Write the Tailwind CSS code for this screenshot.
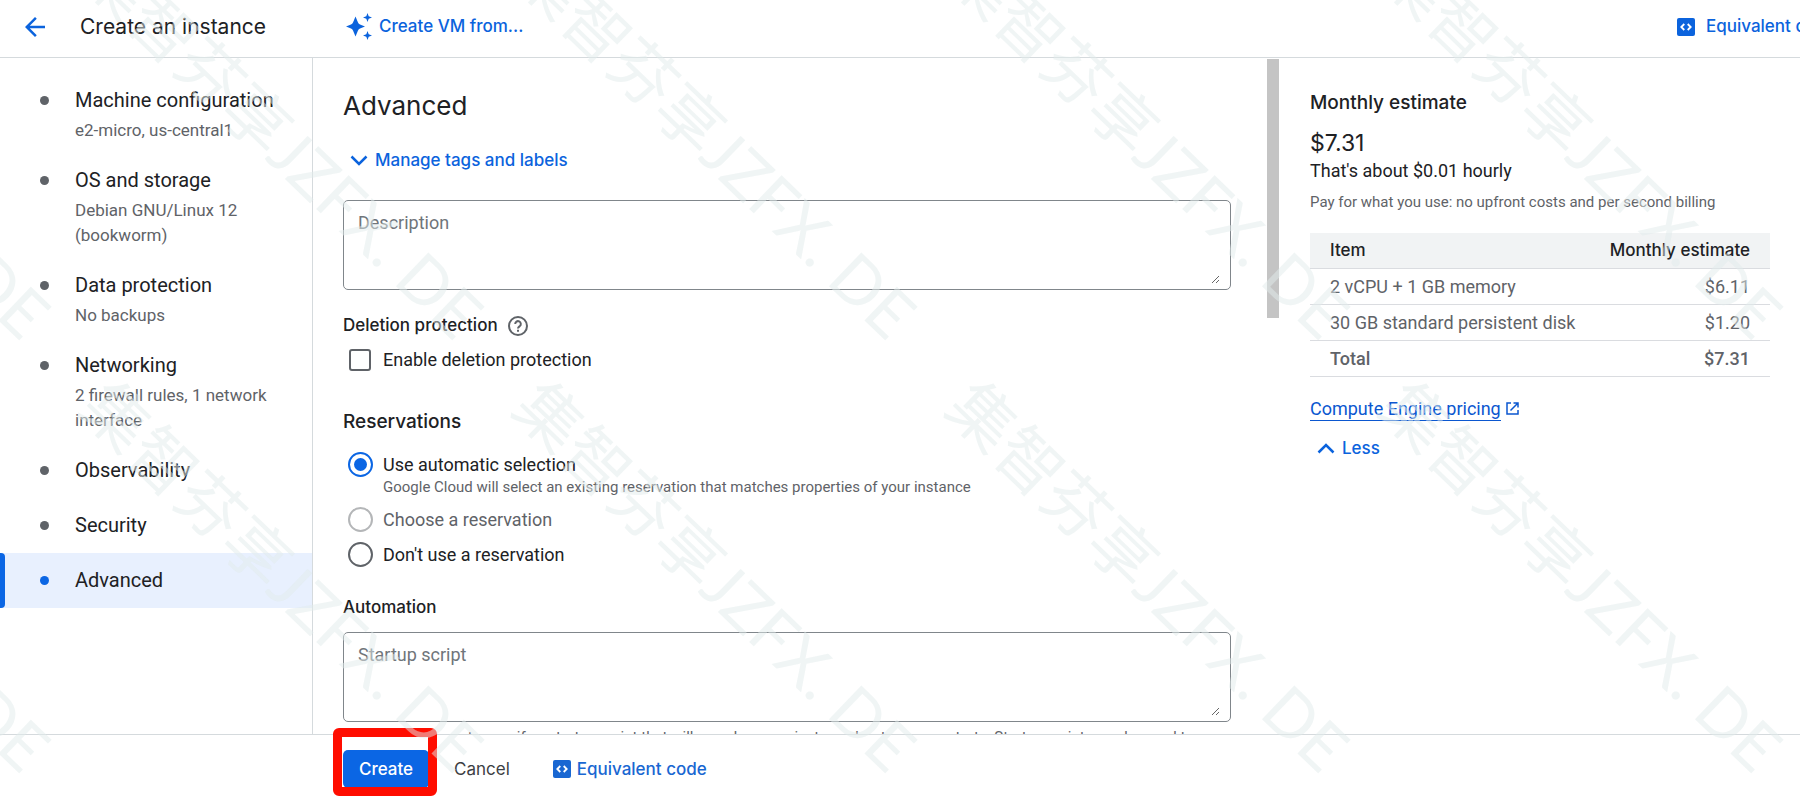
<!DOCTYPE html>
<html lang="en">

<head>
      <meta charset="UTF-8">
      <meta name="viewport" content="width=device-width, initial-scale=1.0">
      <title>Create an instance</title>
      <script src="https://cdn.jsdelivr.net/npm/@tailwindcss/browser@4"></script>
</head>

<body class="relative flex h-screen flex-col overflow-hidden bg-white font-[Roboto,sans-serif] text-lg leading-[25px] text-[#202124]">
      <!-- Header -->
      <header class="flex h-[58px] shrink-0 items-center border-b border-[#d5dadd] pb-1 font-[Inter,sans-serif]">
            <button aria-label="Back" class="ml-5 text-[#0b63dd]">
                  <svg class="size-[30px]" viewBox="0 0 24 24" fill="currentColor"><path d="M20 11H7.83l5.59-5.59L12 4l-8 8 8 8 1.41-1.41L7.83 13H20v-2z" /></svg>
            </button>
            <h1 class="ml-[30px] w-[266px] text-[21px]">Create an instance</h1>
            <button class="flex items-center gap-[7px] text-[17px] font-medium text-[#0b63dd]">
                  <svg class="h-[27px] w-[26px]" viewBox="0 0 26 27" fill="currentColor">
                        <path d="M9.500 3.500L12 9.500Q12.600 11 14 11.500L19 13.500L14 15.500Q12.600 16 12 17.500L9.500 23.500L7 17.500Q6.400 16 5 15.500L0 13.500L5 11.500Q6.400 11 7 9.500Z" />
                        <path d="M21.500 0L22.700 3.300L26 4.500L22.700 5.700L21.500 9L20.300 5.700L17 4.500L20.300 3.300Z" />
                        <path d="M21.500 18L22.700 21.300L26 22.500L22.700 23.700L21.500 27L20.300 23.700L17 22.500L20.300 21.300Z" />
                  </svg>
                  Create VM from...
            </button>
            <button class="ml-auto flex w-[123px] shrink-0 items-center gap-[11px] text-[17px] font-medium whitespace-nowrap text-[#0b63dd]">
                  <svg class="size-[18px] shrink-0" viewBox="0 0 18 18"><rect width="18" height="18" rx="2" fill="currentColor" /><path d="M7.300 6L4.300 9l3 3M10.700 6l3 3-3 3" fill="none" stroke="#fff" stroke-width="1.800" /></svg>
                  Equivalent code
            </button>
      </header>

      <div class="flex min-h-0 flex-1">
            <!-- Sidebar -->
            <nav class="w-[313px] shrink-0 border-r border-[#d5dadd] pt-[15px]">
                  <a href="#machine" class="relative block pt-[15px] pr-8 pb-[10px] pl-[75px]">
                        <span class="absolute top-[23px] left-10 size-[9px] rounded-full bg-[#5f6368]"></span>
                        <span class="block text-xl leading-[25px]">Machine configuration</span>
                        <span class="mt-[5px] block text-[17px] leading-[25px] text-[#5f6368]">e2-micro, us-central1</span>
                  </a>
                  <a href="#storage" class="relative block pt-[15px] pr-8 pb-[10px] pl-[75px]">
                        <span class="absolute top-[23px] left-10 size-[9px] rounded-full bg-[#5f6368]"></span>
                        <span class="block text-xl leading-[25px]">OS and storage</span>
                        <span class="mt-[5px] block text-[17px] leading-[25px] text-[#5f6368]">Debian GNU/Linux 12 (bookworm)</span>
                  </a>
                  <a href="#protection" class="relative block pt-[15px] pr-8 pb-[10px] pl-[75px]">
                        <span class="absolute top-[23px] left-10 size-[9px] rounded-full bg-[#5f6368]"></span>
                        <span class="block text-xl leading-[25px]">Data protection</span>
                        <span class="mt-[5px] block text-[17px] leading-[25px] text-[#5f6368]">No backups</span>
                  </a>
                  <a href="#networking" class="relative block pt-[15px] pr-8 pb-[10px] pl-[75px]">
                        <span class="absolute top-[23px] left-10 size-[9px] rounded-full bg-[#5f6368]"></span>
                        <span class="block text-xl leading-[25px]">Networking</span>
                        <span class="mt-[5px] block text-[17px] leading-[25px] text-[#5f6368]">2 firewall rules, 1 network interface</span>
                  </a>
                  <a href="#observability" class="relative block py-[15px] pr-8 pl-[75px]">
                        <span class="absolute top-[23px] left-10 size-[9px] rounded-full bg-[#5f6368]"></span>
                        <span class="block text-xl leading-[25px]">Observability</span>
                  </a>
                  <a href="#security" class="relative block py-[15px] pr-8 pl-[75px]">
                        <span class="absolute top-[23px] left-10 size-[9px] rounded-full bg-[#5f6368]"></span>
                        <span class="block text-xl leading-[25px]">Security</span>
                  </a>
                  <a href="#advanced" class="relative block bg-[#e8f0fe] py-[15px] pr-8 pl-[75px]">
                        <span class="absolute inset-y-0 left-0 w-[5px] rounded-r bg-[#0b66e4]"></span>
                        <span class="absolute top-[23px] left-10 size-[9px] rounded-full bg-[#0b66e4]"></span>
                        <span class="block text-xl leading-[25px]">Advanced</span>
                  </a>
            </nav>

            <!-- Form -->
            <main class="relative flex min-w-0 flex-1 flex-col items-start overflow-hidden pr-[49px] pl-[30px]">
                  <h2 class="mt-[33px] font-[Inter,sans-serif] text-[26px] leading-[30px]">Advanced</h2>
                  <button class="mt-[27px] ml-[7px] flex items-center gap-[7px] font-[Inter,sans-serif] text-[17px] font-medium text-[#0b63dd]">
                        <svg class="h-[11px] w-[18px]" viewBox="0 0 18 11" fill="none" stroke="currentColor" stroke-width="2.500"><path d="M1.500 1.500L9 9l7.500-7.500" /></svg>
                        Manage tags and labels
                  </button>

                  <div class="mt-[27px] h-[90px] w-full shrink-0 rounded-[5px] border border-[#80868b] pt-[9px] pr-[10px] pb-[5px] pl-[14px]">
                        <textarea aria-label="Description" placeholder="Description" class="size-full resize placeholder-[#70757a] outline-none"></textarea>
                  </div>

                  <h3 class="mt-[23px] flex items-center gap-[10px] font-[Inter,sans-serif] text-[17px] font-medium">
                        Deletion protection
                        <svg class="size-5" viewBox="0 0 20 20" fill="none" stroke="#5f6368" stroke-width="2"><circle cx="10" cy="10" r="9" /><path d="M7.200 8a2.800 2.800 0 1 1 4.600 2.100C10.600 11 10 11.300 10 12.500" /><path d="M10 13.800v2" /></svg>
                  </h3>
                  <label class="mt-[9px] ml-1.5 flex items-center gap-3">
                        <input type="checkbox" class="size-[22px] appearance-none rounded-[3px] border-2 border-[#5f6368]">
                        Enable deletion protection
                  </label>

                  <h3 class="mt-[37px] font-[Inter,sans-serif] text-[19px] font-medium">Reservations</h3>
                  <div class="mt-[18px] ml-[5px] flex items-start gap-[10px]">
                        <input type="radio" id="auto" name="reservation" checked class="size-[25px] appearance-none rounded-full border-2 border-[#0b66e4] bg-[#0b66e4] bg-clip-content p-1">
                        <div>
                              <label for="auto" class="block">Use automatic selection</label>
                              <p class="text-[15px] leading-5 text-[#5f6368]">Google Cloud will select an existing reservation that matches properties of your instance</p>
                        </div>
                  </div>
                  <label class="mt-[10px] ml-[5px] flex items-center gap-[10px] text-[#5f6368]">
                        <input type="radio" name="reservation" disabled class="size-[25px] appearance-none rounded-full border-2 border-[#b4b6b8]">
                        Choose a reservation
                  </label>
                  <label class="mt-[10px] ml-[5px] flex items-center gap-[10px]">
                        <input type="radio" name="reservation" class="size-[25px] appearance-none rounded-full border-2 border-[#5f6368]">
                        Don't use a reservation
                  </label>

                  <h3 class="mt-[28px] font-[Inter,sans-serif] text-[17px] font-medium">Automation</h3>
                  <div class="mt-[12px] h-[90px] w-full shrink-0 rounded-[5px] border border-[#80868b] pt-[9px] pr-[10px] pb-[5px] pl-[14px]">
                        <textarea aria-label="Startup script" placeholder="Startup script" class="size-full resize placeholder-[#70757a] outline-none"></textarea>
                  </div>
                  <p class="mt-[5px] px-[15px] text-[15px] leading-5 text-[#5f6368]">You can choose to specify a startup script that will run when your instance boots up or restarts. Startup scripts can be used to install software</p>

                  <!-- Scroll thumb -->
                  <div class="absolute top-[1px] right-[1px] h-[259px] w-3 bg-[#c4c4c4]"></div>
            </main>

            <!-- Cost estimate -->
            <aside class="flex w-[520px] shrink-0 flex-col items-start px-[30px] pt-8">
                  <h2 class="font-[Inter,sans-serif] text-[19px] font-medium">Monthly estimate</h2>
                  <p class="mt-[13px] font-[Inter,sans-serif] text-[23px] leading-[30px]">$7.31</p>
                  <p>That's about $0.01 hourly</p>
                  <p class="mt-[9px] text-[15px] leading-5 text-[#5f6368]">Pay for what you use: no upfront costs and per second billing</p>
                  <table class="mt-[21px] w-full text-left whitespace-nowrap text-[#5f6368]">
                        <thead class="bg-[#f1f3f4] font-[Inter,sans-serif] text-[17px] text-[#202124]">
                              <tr class="h-[35px] border-b border-[#dadce0]">
                                    <th class="pl-5 font-medium">Item</th>
                                    <th class="pr-5 text-right font-medium">Monthly estimate</th>
                              </tr>
                        </thead>
                        <tbody>
                              <tr class="h-9 border-b border-[#dadce0]">
                                    <td class="pl-5">2 vCPU + 1 GB memory</td>
                                    <td class="pr-5 text-right">$6.11</td>
                              </tr>
                              <tr class="h-9 border-b border-[#dadce0]">
                                    <td class="pl-5">30 GB standard persistent disk</td>
                                    <td class="pr-5 text-right">$1.20</td>
                              </tr>
                              <tr class="h-9 border-b border-[#dadce0] font-medium">
                                    <td class="pl-5">Total</td>
                                    <td class="pr-5 text-right">$7.31</td>
                              </tr>
                        </tbody>
                  </table>
                  <a href="#pricing" class="mt-5 flex items-center gap-[5px] text-[#0b57d0]">
                        <span class="border-b border-[#0b57d0] leading-[23px]">Compute Engine pricing</span>
                        <svg class="size-[13px]" viewBox="0 0 13 13" fill="none" stroke="currentColor" stroke-width="1.500"><path d="M5 1H1v11h11V8M7.500 1H12v4.500M12 1L4.500 8.500" /></svg>
                  </a>
                  <button class="mt-[15px] ml-[7px] flex items-center gap-[7px] font-[Inter,sans-serif] text-[17px] font-medium text-[#0b63dd]">
                        <svg class="h-[11px] w-[18px]" viewBox="0 0 18 11" fill="none" stroke="currentColor" stroke-width="2.500"><path d="M1.500 9.500L9 2l7.500 7.500" /></svg>
                        Less
                  </button>
            </aside>
      </div>

      <!-- Footer actions -->
      <footer class="flex h-[62px] shrink-0 items-start border-t border-[#d5dadd] pt-[15px] pl-[343px] font-[Inter,sans-serif] text-[17px] font-medium">
            <div class="relative">
                  <button class="h-[38px] w-[86px] rounded-[5px] bg-[#0b66e4] text-white">Create</button>
                  <div class="pointer-events-none absolute -top-[22px] -right-2 -bottom-2 -left-[10px] rounded-md border-[9px] border-[#ff0d00]"></div>
            </div>
            <button class="ml-[25px] h-[38px] font-normal text-[#3c4043]">Cancel</button>
            <button class="ml-[43px] flex h-[38px] items-center gap-[6px] text-[#1967d2]">
                  <svg class="size-[18px] shrink-0" viewBox="0 0 18 18"><rect width="18" height="18" rx="2" fill="currentColor" /><path d="M7.300 6L4.300 9l3 3M10.700 6l3 3-3 3" fill="none" stroke="#fff" stroke-width="1.800" /></svg>
                  Equivalent code
            </button>
      </footer>

      <!-- Watermark, repeated every 433px both ways -->
      <svg class="pointer-events-none absolute inset-0 size-full" aria-hidden="true">
            <g class="fill-[#e1ecec]/50 font-[Lato,'Noto_Sans_CJK_SC',sans-serif] text-[65px]">
                  <text transform="translate(-356 -22) rotate(44)">集智芬享JZFX. DE</text>
                  <text transform="translate(77 -22) rotate(44)">集智芬享JZFX. DE</text>
                  <text transform="translate(510 -22) rotate(44)">集智芬享JZFX. DE</text>
                  <text transform="translate(943 -22) rotate(44)">集智芬享JZFX. DE</text>
                  <text transform="translate(1376 -22) rotate(44)">集智芬享JZFX. DE</text>
                  <text transform="translate(-356 411) rotate(44)">集智芬享JZFX. DE</text>
                  <text transform="translate(77 411) rotate(44)">集智芬享JZFX. DE</text>
                  <text transform="translate(510 411) rotate(44)">集智芬享JZFX. DE</text>
                  <text transform="translate(943 411) rotate(44)">集智芬享JZFX. DE</text>
                  <text transform="translate(1376 411) rotate(44)">集智芬享JZFX. DE</text>
            </g>
      </svg>
</body>

</html>
